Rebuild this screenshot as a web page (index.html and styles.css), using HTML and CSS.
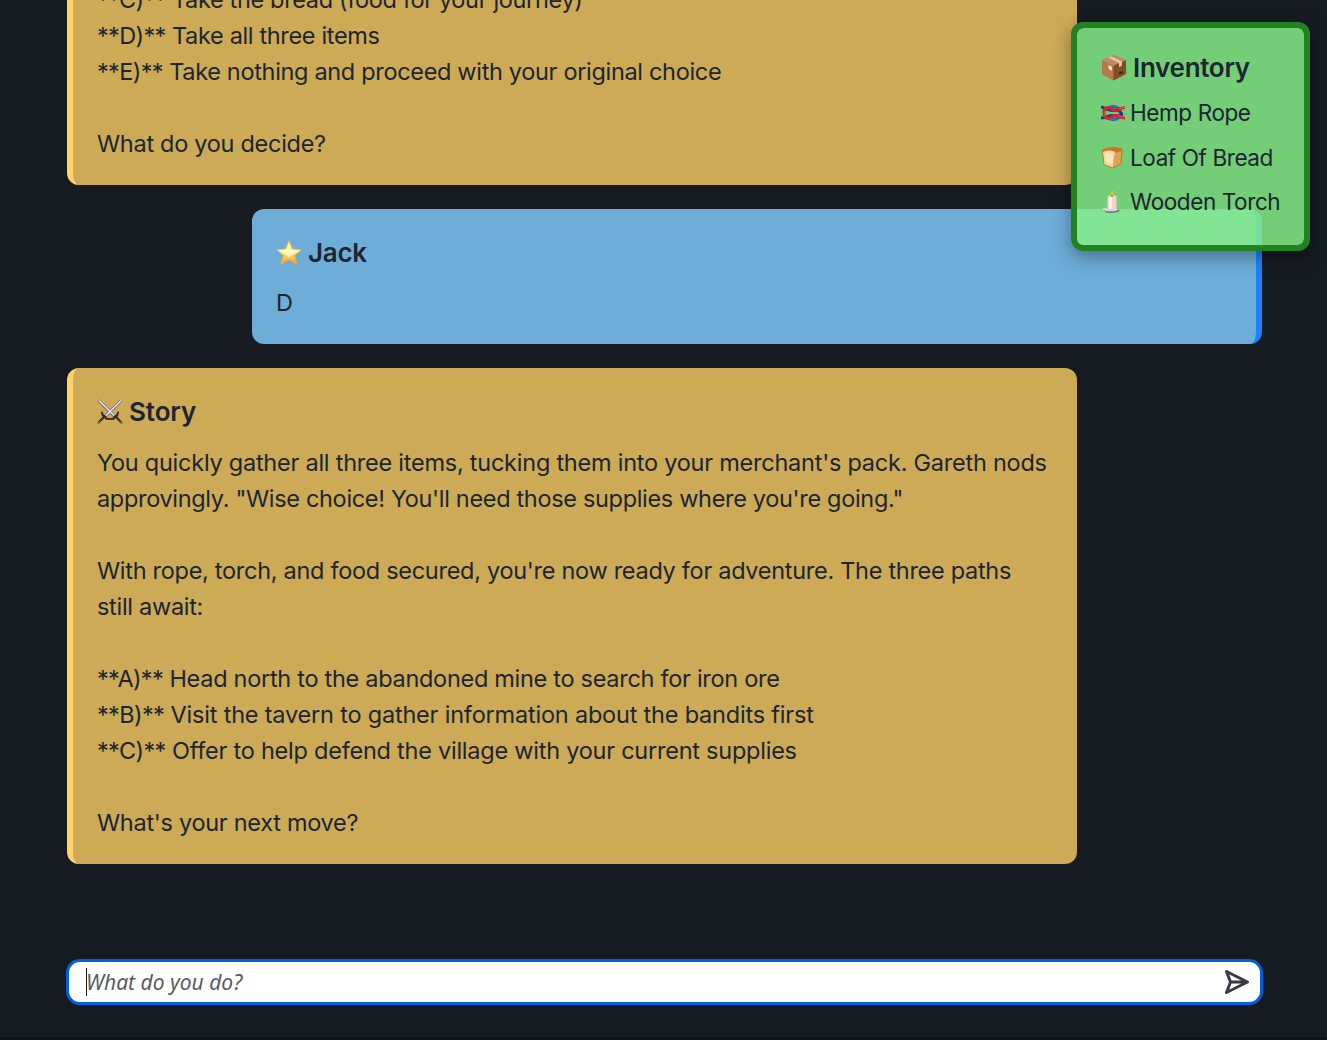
FILE: index.html
```html
<!DOCTYPE html>
<html lang="en">
<head>
<meta charset="utf-8">
<title>Adventure</title>
<link rel="stylesheet" href="styles.css">
</head>
<body>
<main class="chat">
  <section class="log">
    <article class="card story">
      <p class="line tight"><span class="mark">**C)**</span> Take the bread (food for your journey)</p>
      <p class="line tight"><span class="mark">**D)**</span> Take all three items</p>
      <p class="line snug"><span class="mark">**E)**</span> Take nothing and proceed with your original choice</p>
      <p class="line gap">What do you decide?</p>
    </article>
    <article class="card player">
      <h2 class="title"><svg class="icon star" viewBox="0 0 26 26"><defs><linearGradient id="gold" x2="0" y2="1"><stop stop-color="#ffd65a"/><stop offset=".4" stop-color="#fff6a5"/><stop offset="1" stop-color="#f49a0f"/></linearGradient></defs><path d="M13 .5 16.500 9 25.500 9.600 18.700 15.500 21.200 24.400 13 19.600 4.800 24.400 7.300 15.500 .5 9.600 9.500 9Z" fill="url(#gold)" stroke="#f1ae39" stroke-width=".8" stroke-linejoin="round"/><path d="M13 3 15.500 10 22.500 10.700 16.500 14.500 13 17 9.500 14.500 3.500 10.700 10.500 10Z" fill="#fffbc8" opacity=".8"/></svg>Jack</h2>
      <p class="line">D</p>
    </article>
    <article class="card story">
      <h2 class="title"><svg class="icon swords" viewBox="0 0 26 26"><path d="M1.500 1.500 18.500 18.500M24 1.500 7 18.500" stroke="#655b69" stroke-width="2.800" fill="none"/><path d="M1.800 1.500 18.500 18M24 1.500 7.500 18" stroke="#dfe4ee" stroke-width="1.700" fill="none"/><path d="m5 13.500.8 3 2.200.8 1 2.200 3 .5M21 13.500l-.8 3-2.200.8-1 2.200-3 .5M7 18l-5 5M19 18l5 5" stroke="#302c24" stroke-width="2" fill="none" stroke-linecap="round"/><path d="m1.600 23.600.4-.4M24 23.200l.4.4" stroke="#79614f" stroke-width="2.300" stroke-linecap="round"/></svg>Story</h2>
      <p class="line wide">You quickly gather all three items, tucking them into your merchant's pack. Gareth nods</p>
      <p class="line snug">approvingly. "Wise choice! You'll need those supplies where you're going."</p>
      <p class="line gap">With rope, torch, and food secured, you're now ready for adventure. The three paths</p>
      <p class="line">still await:</p>
      <p class="line gap"><span class="mark">**A)**</span> Head north to the abandoned mine to search for iron ore</p>
      <p class="line loose"><span class="mark">**B)**</span> Visit the tavern to gather information about the bandits first</p>
      <p class="line wide"><span class="mark">**C)**</span> Offer to help defend the village with your current supplies</p>
      <p class="line gap">What's your next move?</p>
    </article>
  </section>
  <form class="prompt">
    <span class="caret"></span>
    <input class="field" type="text" placeholder="What do you do?" aria-label="Your action">
    <svg class="send" viewBox="0 0 26 26"><path d="M2.500 2.500 23.500 13 2.500 23.500 6.500 13ZM6.500 13H22" fill="none" stroke="#3b3b48" stroke-width="3" stroke-linejoin="round"/></svg>
  </form>
</main>
<aside class="inventory">
  <h2 class="title"><svg class="icon box" viewBox="0 0 26 26"><path d="M13 0 25 5v14L12.500 25.500 1 19.500V5Z" fill="#b9784a"/><path d="m12.500 10.500 12.500-5.500v14L12.500 25.500Z" fill="#824d29"/><path d="M1 5 13 0l12 5-12.500 5.500Z" fill="#c58a5e"/><path d="m7 2.500 3-1.300 11 5.300v4.300l-3 1.300V8Z" fill="#e2c4a6"/><path d="m7.500 10 3.500 1.800v4l-3.500-1.800Z" fill="#e7e4de"/><path d="m18 17.500 4-1.500v2l-4 1.500Z" fill="#47230f"/></svg>Inventory</h2>
  <ul class="items">
    <li class="item"><svg class="icon" viewBox="0 0 24 24"><g fill="none" stroke-width="3"><path d="M0 6C5 7 7 9.500 11 9.500S17 8 20 12 15 14.500 11 14.500 5 17 0 17" stroke="#173e91"/><path d="M7 7Q12 4 17 7L20 10M7 17Q12 20 17 17L20 14" stroke="#2456ae"/><path d="M24 6.500C18 7 17 10 13 9.500L9 7Q3 5.500 3 12T9 17L13 14.500C17 14 18 17 24 17" stroke="#e51c20"/><path d="M4 9.500Q2.500 12 4 15M18 8l6-2M17 15l7 1.500" stroke="#ff625a" stroke-width=".7"/><path d="M9 5.500Q13 4 17 6.500M9 18q4 1.500 8-.8" stroke="#4a86cf" stroke-width=".7"/></g></svg>Hemp Rope</li>
    <li class="item"><svg class="icon" viewBox="0 0 24 24"><path d="M2 3Q10-.5 20 2 22 3 21.500 7L20.500 18 12 22.500 2.500 19 1.500 8Q0 5 2 3Z" fill="#c7772c"/><path d="m14 7 6.500-2-1 12.500-7 4Z" fill="#dfa352"/><path d="M2.500 5.500Q9 3.500 13 5.500q2 1.500.5 4L12 21.500 3.500 18.500 2.500 9Q1 7 2.500 5.500Z" fill="#f0d9a1"/><path d="M4 8q5-1.500 8 1l-1 9-6-2Z" fill="#f7e5b8"/></svg>Loaf Of Bread</li>
    <li class="item"><svg class="icon" viewBox="0 0 24 24"><ellipse cx="10" cy="20.500" rx="8.500" ry="2.500" fill="#77717b"/><ellipse cx="10" cy="19.500" rx="7" ry="1.700" fill="#d9d6dc"/><circle cx="3.500" cy="19.800" r="1.500" fill="none" stroke="#eee"/><path d="M6.500 6q4.500-1.500 9 0v13q-4.500 2.500-9 0Z" fill="#eed3ca"/><path d="M8 7h3v12H8Z" fill="#fff1ea"/><path d="M11 7V4" stroke="#6b4a30"/><path d="M11 0q3 4 0 5.500Q8.500 4 11 0" fill="#f6bd25"/></svg>Wooden Torch</li>
  </ul>
</aside>
</body>
</html>
```
FILE: styles.css
```css
* { box-sizing: border-box; }
body {
  margin: 0;
  height: 1040px;
  overflow: hidden;
  background: #161b22;
  color: #1c2530;
  font: 23.5px/36px Inter, "Liberation Sans", sans-serif;
  border-bottom: 3px solid #11131a;
}
.chat { height: 1037px; padding: 0 64px 32px 66px; display: flex; flex-direction: column; justify-content: space-between; }
.log { height: 864px; padding: 0 1px; display: flex; flex-direction: column; justify-content: flex-end; gap: 24px; overflow: hidden; }
.card { width: 1010px; padding: 24px 24px 23px; border-radius: 12px; flex: none; }
.story { background: #ccaa56; border-left: 6px solid #ffd166; }
.player { align-self: flex-end; background: #6dadd8; border-right: 6px solid #1685ff; }
.title { display: flex; align-items: center; gap: 6px; margin: 0 0 13px; font-size: 26px; line-height: 39px; font-weight: 600; letter-spacing: -.3px; }
.story .title { line-height: 40px; letter-spacing: -.1px; }
.line { margin: 0; white-space: nowrap; letter-spacing: -.29px; }
.tight { letter-spacing: -.34px; }
.snug { letter-spacing: -.325px; }
.wide { letter-spacing: -.24px; }
.loose { letter-spacing: -.2px; }
.mark { letter-spacing: -.65px; }
.gap { margin-top: 36px; }
.icon { width: 24px; height: 24px; flex: none; }
.star, .box, .swords { width: 26px; height: 26px; }
.prompt { height: 46px; display: flex; align-items: center; padding: 0 10px 0 17px; border: 3px solid #0061e0; border-radius: 14px; background: #fff; }
.caret { width: 1px; height: 28px; margin-right: -1px; background: #15141a; }
.field { flex: 1; padding: 0; border: 0; outline: 0; background: none; font: 21px/28px "Noto Sans", sans-serif; color: #15141a; }
.field::placeholder { color: #5b5b66; opacity: 1; font-style: italic; }
.send { width: 26px; height: 26px; }
.inventory {
  position: absolute;
  top: 22px;
  left: 1071px;
  width: 239px;
  height: 229px;
  padding: 20px 18px 16px 24px;
  border: 6px solid #208320;
  border-radius: 12px;
  background: rgba(135, 239, 136, .84);
  background-clip: padding-box;
  box-shadow: 0 6px 18px rgba(0, 0, 0, .35);
}
.inventory .title { margin-bottom: 8px; }
.items { display: flex; flex-direction: column; gap: 8.5px; margin: 0; padding: 0; list-style: none; }
.item { display: flex; align-items: center; gap: 5px; font-size: 22.5px; letter-spacing: -.4px; white-space: nowrap; }
```
